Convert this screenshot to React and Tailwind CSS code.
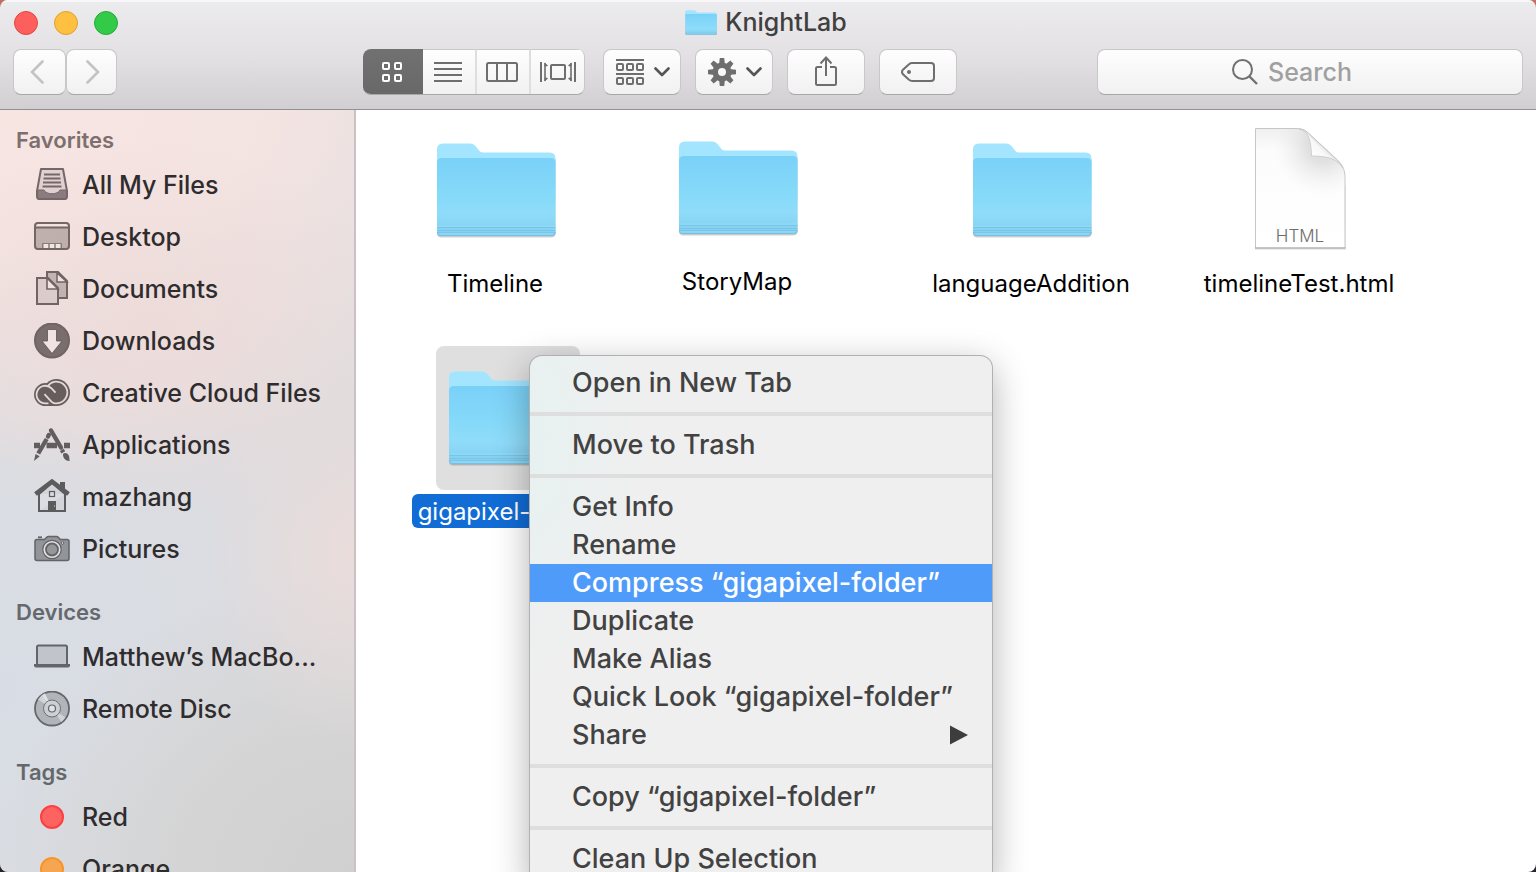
import React, { useId } from "react";

const TOOL_BUTTON =
  "flex h-[46px] items-center justify-center rounded-lg border border-[#c9c7c9] border-b-[#a9a7a9] bg-linear-to-b from-[#fefefe] to-[#f1f1f1] text-[#6e6e6e]";

/* ---------- Folder and document artwork ---------- */

function Folder({ className }) {
  const id = useId();
  return (
    <svg viewBox="0 0 120 98" className={className} aria-hidden="true">
      <defs>
        <linearGradient id={id} x1="0" y1="0" x2="0" y2="1">
          <stop offset="0" stopColor="#7ad1f8" />
          <stop offset="0.45" stopColor="#85d9f9" />
          <stop offset="0.72" stopColor="#8fdcfa" />
          <stop offset="0.86" stopColor="#87d4f4" />
          <stop offset="1" stopColor="#84ceee" />
        </linearGradient>
      </defs>
      <path d="M1 8v82.500q0 4 4 4h110.500q4 0 4-4V16z" fill="#000" opacity="0.18" />
      <path d="M1 6.500q0-6 6-6h27.500q3 0 5 2.500l3.500 4.500q1.500 2 4 2H113.500q6 0 6 6V60H1z" fill="#a3e5ff" />
      <path d="M1 19.500q0-4.500 5-4.500h108.500q5 0 5 4.500v69.500q0 4-4 4H5q-4 0-4-4z" fill={`url(#${id})`} />
      <path d="M1 84.500h118.500M1 87.500h118.500M1 89.500h118.500" stroke="#78c5e7" strokeWidth="1" />
      <path d="M1 83h118.500M1 91h118.500" stroke="#96dcf7" strokeWidth="1" />
      <path d="M1.300 89.500q0.300 3.200 3.700 3.200h110.500q3.400 0 3.700-3.200" fill="none" stroke="#6fb9d9" strokeWidth="0.800" />
    </svg>
  );
}

function HtmlDocument() {
  return (
    <div className="relative h-[126px] w-[94px]">
      <svg viewBox="0 0 94 126" className="size-full" aria-hidden="true">
        <defs>
          <linearGradient id="page-fill" x1="0" y1="0" x2="0" y2="1">
            <stop offset="0" stopColor="#efefef" />
            <stop offset="0.18" stopColor="#fcfcfc" />
            <stop offset="1" stopColor="#ffffff" />
          </linearGradient>
          <radialGradient id="page-shade" gradientUnits="userSpaceOnUse" cx="70" cy="20" r="50">
            <stop offset="0" stopColor="#cccccc" stopOpacity="0.8" />
            <stop offset="0.35" stopColor="#d2d2d2" stopOpacity="0.6" />
            <stop offset="0.7" stopColor="#e2e2e2" stopOpacity="0.3" />
            <stop offset="1" stopColor="#eeeeee" stopOpacity="0" />
          </radialGradient>
          <linearGradient id="page-curl" gradientUnits="userSpaceOnUse" x1="58" y1="31" x2="72" y2="17">
            <stop offset="0" stopColor="#ffffff" />
            <stop offset="0.6" stopColor="#f8f8f8" />
            <stop offset="1" stopColor="#d8d8d8" />
          </linearGradient>
        </defs>
        <path d="M2 60h91v64H2z" fill="#000" opacity="0.08" />
        <path d="M2.500 2.500H43c7 0 10 2 15 7l26 24c5 5 8 10 8 18v70.500H2.500z" fill="url(#page-fill)" />
        <path d="M2.500 2.500H43c7 0 10 2 15 7l26 24c5 5 8 10 8 18v70.500H2.500z" fill="url(#page-shade)" stroke="#c6c6c6" />
        <path d="M46 3c9 2 12 10 12.500 27C75 30 84 33 90 42c-2-4-4-6-7-9L58 10C54 6 51 3.500 46 3z" fill="url(#page-curl)" stroke="#c6c6c6" strokeWidth="0.800" />
        <path d="M2 122h90.500" stroke="#a8a8a8" />
      </svg>
      <span className="absolute inset-x-0 bottom-0 text-center text-[17px] leading-8 font-light text-[#6d6d6d]">HTML</span>
    </div>
  );
}

/* ---------- Sidebar icons (36 x 36 grid) ---------- */

function SideIcon({ children }) {
  return (
    <svg viewBox="0 0 36 36" className="size-9 shrink-0" fill="none" stroke="currentColor" strokeWidth="2" aria-hidden="true">
      {children}
    </svg>
  );
}

const AllFilesIcon = () => (
  <SideIcon>
    <path d="M7 2h22l4 22v5q0 3-2 3H5q-2 0-2-3v-5z" fill="currentColor" fillOpacity="0.15" strokeLinejoin="round" />
    <path d="M3 23h7c2 5 14 5 16 0h7v6q0 3-2 3H5q-2 0-2-3z" fill="currentColor" fillOpacity="0.8" stroke="none" />
    <path d="M10 7.500h16M9.500 11.500h17M9 15.500h18M8.500 19.500h19" strokeWidth="1.800" />
    <path d="M3 23h7c2 5 14 5 16 0h7" strokeWidth="1" />
  </SideIcon>
);

const DesktopIcon = () => (
  <SideIcon>
    <path d="M1 8h34v19q0 3-3 3H4q-3 0-3-3z" fill="currentColor" fillOpacity="0.4" stroke="none" />
    <rect x="1" y="4" width="34" height="26" rx="3" />
    <path d="M1 8.500h34" />
    <path d="M10 25h4v4h-4zM16 25h4v4h-4zM22 25h4v4h-4z" fill="#f2e6e4" stroke="none" />
    <path d="M8.500 29v-4.500h19V29M15 24.500V29M21 24.500V29" strokeWidth="1" opacity="0.7" />
  </SideIcon>
);

const DocumentsIcon = () => (
  <SideIcon>
    <path d="M13 9V1h11l9 9v17H24" fill="currentColor" fillOpacity="0.35" />
    <path d="M23 2v9h10z" fill="#efe2e0" strokeWidth="1.500" />
    <path d="M3 7h11l10 10v16H3z" fill="#d9cccb" />
    <path d="M13 7v11h11z" fill="#efe2e0" strokeWidth="1.600" />
  </SideIcon>
);

const DownloadsIcon = () => (
  <SideIcon>
    <circle cx="18" cy="17.500" r="17" fill="currentColor" fillOpacity="0.92" />
    <path d="M13.500 6.500h9V18H28L18 30.500 8 18h5.500z" fill="#f0e3e1" stroke="#5f5452" strokeWidth="0.800" />
  </SideIcon>
);

const CreativeCloudIcon = () => (
  <SideIcon>
    <circle cx="11.500" cy="19.600" r="11.500" fill="currentColor" stroke="none" />
    <circle cx="22.500" cy="17.500" r="13.500" fill="currentColor" stroke="none" />
    <path d="M11 22h12v9H11z" fill="currentColor" stroke="none" />
    <path d="M14.200 10.600A10.800 10.800 0 1 1 22.500 28.300H21c-1.500 0-2.400-.5-3.600-1.700L10.500 19.200" stroke="#e5d9d8" strokeWidth="1.800" />
    <path d="M14.500 28.400h-3A8.800 8.800 0 1 1 17.800 13.600l3.700 4" stroke="#e5d9d8" strokeWidth="1.800" />
  </SideIcon>
);

const ApplicationsIcon = () => (
  <SideIcon>
    <path d="M0 18.500h6M12.500 18.500h10.500M30 18.500h6" strokeWidth="5.500" />
    <path d="M17 3.500l10 17" strokeWidth="4.400" strokeLinecap="round" />
    <path d="M27.800 22.800l1.500 2.500" strokeWidth="4.400" />
    <path d="M29 27c2-2 5-.5 6 2 .7 1.800 0 3.500.8 5-4 .3-7-3-6.800-7z" fill="currentColor" stroke="none" />
    <path d="M14.800 8l-.8 1.500" strokeWidth="4.400" strokeLinecap="round" />
    <path d="M12.700 12L4.200 26.500" strokeWidth="4.400" />
    <path d="M1.500 27l4.200 2.200L0 34z" fill="currentColor" stroke="none" />
  </SideIcon>
);

const HomeIcon = () => (
  <SideIcon>
    <path d="M5 15v17h26V15M5 32V15L18 4l13 11" fill="currentColor" fillOpacity="0.06" />
    <path d="M1.500 15L18 2.500 34.500 15" strokeWidth="4.400" />
    <path d="M26 3h5v9l-5-4z" fill="currentColor" stroke="none" />
    <rect x="15.500" y="12.500" width="5" height="5" strokeWidth="1.200" />
    <path d="M14 22h8v10h-8z" fill="currentColor" stroke="none" />
    <circle cx="20.500" cy="27" r="0.600" fill="#e5e2e3" stroke="none" />
  </SideIcon>
);

const PicturesIcon = () => (
  <SideIcon>
    <path d="M4 6.300h4" strokeWidth="1.800" />
    <path d="M3 8.500h7.500l2.200-2.200q.6-.8 1.800-.8h8q1.200 0 1.800.8l2 2.200H33q2 0 2 2v17q0 2-2 2H3q-2 0-2-2v-17q0-2 2-2z" fill="currentColor" fillOpacity="0.6" strokeWidth="1.500" />
    <circle cx="18" cy="18.500" r="9.200" fill="#e2e1e3" strokeWidth="1.200" />
    <circle cx="18" cy="18.500" r="6" fill="#97979a" strokeWidth="1.800" />
    <circle cx="28.500" cy="12" r="1.300" fill="#e2e1e3" strokeWidth="1" />
  </SideIcon>
);

const LaptopIcon = () => (
  <SideIcon>
    <path d="M3 25V8q0-1.500 1.500-1.500h27Q33 6.500 33 8v17" fill="currentColor" fillOpacity="0.2" />
    <path d="M0 25h36v1.500q0 2-2 2H2q-2 0-2-2z" fill="currentColor" stroke="none" />
  </SideIcon>
);

const DiscIcon = () => (
  <SideIcon>
    <circle cx="18" cy="17.500" r="17" fill="#b1b4b9" strokeWidth="1.800" />
    <path d="M18 17.500L4 8.500l3.500-4zM18 17.500l13.500 9-4 4.500z" fill="#d0d3d8" stroke="none" />
    <path d="M18 17.500L7.500 4.500 11 2.300z" fill="#dee1e6" stroke="none" />
    <circle cx="18" cy="17.500" r="8.500" fill="#cfd2d7" strokeWidth="1" opacity="0.9" />
    <circle cx="18" cy="17.500" r="3.500" fill="#dfe2e8" strokeWidth="1.200" />
  </SideIcon>
);

const TagDot = ({ className }) => (
  <span className="flex w-9 shrink-0 justify-center">
    <span className={`size-6 rounded-full border-2 ${className}`} />
  </span>
);

const SIDEBAR = [
  {
    title: "Favorites",
    heading: "text-[#7d6f6e]",
    items: [
      { label: "All My Files", icon: <AllFilesIcon />, tone: "text-[#74676a]" },
      { label: "Desktop", icon: <DesktopIcon />, tone: "text-[#736665]" },
      { label: "Documents", icon: <DocumentsIcon />, tone: "text-[#716463]" },
      { label: "Downloads", icon: <DownloadsIcon />, tone: "text-[#6f6463]" },
      { label: "Creative Cloud Files", icon: <CreativeCloudIcon />, tone: "text-[#675d5d]" },
      { label: "Applications", icon: <ApplicationsIcon />, tone: "text-[#625e5f]" },
      { label: "mazhang", icon: <HomeIcon />, tone: "text-[#5c5b5d]" },
      { label: "Pictures", icon: <PicturesIcon />, tone: "text-[#626467]" },
    ],
  },
  {
    title: "Devices",
    heading: "text-[#65686d]",
    items: [
      { label: "Matthew’s MacBo...", icon: <LaptopIcon />, tone: "text-[#62656b]" },
      { label: "Remote Disc", icon: <DiscIcon />, tone: "text-[#64676c]" },
    ],
  },
  {
    title: "Tags",
    heading: "text-[#65686b]",
    items: [
      { label: "Red", icon: <TagDot className="border-[#fc3f40] bg-[#fe6261]" />, tone: "" },
      { label: "Orange", icon: <TagDot className="border-[#f99528] bg-[#f6a550]" />, tone: "" },
    ],
  },
];

function Sidebar() {
  return (
    <nav
      aria-label="Sidebar"
      className="w-[356px] shrink-0 overflow-hidden border-r-2 border-[#c9c1c3] bg-[#dcdcdf] bg-[radial-gradient(ellipse_150px_200px_at_354px_440px,#eadcdb_0%,#eadcdb00_100%),radial-gradient(ellipse_260px_190px_at_150px_220px,#eddbd9_0%,#eddbd900_100%),radial-gradient(ellipse_640px_360px_at_0px_0px,#f7e5e2_0%,#f4e4e2_40%,#f0e2e100_100%),radial-gradient(ellipse_360px_300px_at_100%_100%,#d0d0d0_0%,#d4d4d4_45%,#d7d7d800_100%),radial-gradient(ellipse_400px_420px_at_0px_580px,#d8dde5_0%,#d8dde500_100%)] pt-[11px]"
    >
      {SIDEBAR.map((section) => (
        <section key={section.title} className="mb-[18px]">
          <h2 className={`flex h-[38px] items-center pl-4 text-[22px] font-semibold ${section.heading}`}>{section.title}</h2>
          <ul>
            {section.items.map((item) => (
              <li key={item.label}>
                <a href="#" className="flex h-[52px] items-center gap-3 pl-[34px] whitespace-nowrap">
                  <span className={item.tone}>{item.icon}</span>
                  <span className="pt-px text-[25px] font-medium text-[#2f2c2e]">{item.label}</span>
                </a>
              </li>
            ))}
          </ul>
        </section>
      ))}
    </nav>
  );
}

/* ---------- Toolbar ---------- */

const Chevron = () => (
  <svg viewBox="0 0 16 10" className="h-[10px] w-4" fill="none" stroke="#555" strokeWidth="2.600" strokeLinecap="round" strokeLinejoin="round" aria-hidden="true">
    <path d="M1.500 1.500L8 8l6.500-6.500" />
  </svg>
);

const GridIcon = () => (
  <svg viewBox="0 0 20 20" className="size-5" fill="none" stroke="currentColor" strokeWidth="2" aria-hidden="true">
    <rect x="1" y="1" width="6" height="6" rx="1" />
    <rect x="13" y="1" width="6" height="6" rx="1" />
    <rect x="1" y="13" width="6" height="6" rx="1" />
    <rect x="13" y="13" width="6" height="6" rx="1" />
  </svg>
);

const ListIcon = () => (
  <svg viewBox="0 0 28 20" className="h-5 w-7" stroke="currentColor" strokeWidth="2" aria-hidden="true">
    <path d="M0 1h28M0 7h28M0 13h28M0 19h28" />
  </svg>
);

const ColumnsIcon = () => (
  <svg viewBox="0 0 32 20" className="h-5 w-8" fill="none" stroke="currentColor" strokeWidth="2" aria-hidden="true">
    <rect x="1" y="1" width="30" height="18" rx="1.500" />
    <path d="M11 1v18M21 1v18" />
  </svg>
);

const CoverFlowIcon = () => (
  <svg viewBox="0 0 36 20" className="h-5 w-9" fill="none" stroke="currentColor" strokeWidth="2" aria-hidden="true">
    <rect x="11" y="3" width="14" height="14" rx="1" />
    <path d="M1 0v20M35 0v20" />
    <path d="M5 1v18M31 1v18" strokeWidth="1.600" />
    <path d="M4.500 0.500l3.500 3-1.500 1L4.500 4zM4.500 19.500l3.500-3-1.500-1-2 .5zM31.500.500l-3.500 3 1.500 1 2-.5zM31.500 19.500l-3.500-3 1.500-1 2 .5z" fill="currentColor" stroke="none" />
  </svg>
);

const ArrangeIcon = () => (
  <svg viewBox="0 0 28 26" className="h-[26px] w-7" fill="none" stroke="currentColor" strokeWidth="2" aria-hidden="true">
    <path d="M0 1h28M0 15h28" />
    <rect x="1" y="5" width="6" height="6" rx="1" />
    <rect x="11" y="5" width="6" height="6" rx="1" />
    <rect x="21" y="5" width="6" height="6" rx="1" />
    <rect x="1" y="19" width="6" height="6" rx="1" />
    <rect x="11" y="19" width="6" height="6" rx="1" />
    <rect x="21" y="19" width="6" height="6" rx="1" />
  </svg>
);

const GearIcon = () => (
  <svg viewBox="0 0 28 28" className="size-7" aria-hidden="true">
    <g fill="currentColor">
      <path d="M14 4.500a9.500 9.500 0 1 0 0 19 9.500 9.500 0 0 0 0-19zm0 5.500a4 4 0 1 1 0 8 4 4 0 0 1 0-8z" fillRule="evenodd" />
      {[0, 45, 90, 135, 180, 225, 270, 315].map((angle) => (
        <path key={angle} d="M11 7l.8-7h4.400l.8 7z" transform={`rotate(${angle} 14 14)`} />
      ))}
    </g>
  </svg>
);

const ShareIcon = () => (
  <svg viewBox="0 0 24 32" className="h-8 w-6" fill="none" stroke="currentColor" strokeWidth="2" aria-hidden="true">
    <path d="M8 11H3.500Q2 11 2 12.500v15Q2 29 3.500 29h17q1.500 0 1.500-1.500v-15Q22 11 20.500 11H16M12 20V2M6.500 7.500L12 1.500l5.500 6" />
  </svg>
);

const TagIcon = () => (
  <svg viewBox="0 0 34 20" className="h-5 w-[34px]" fill="none" stroke="currentColor" strokeWidth="2" aria-hidden="true">
    <path d="M11 1h19q3 0 3 3v12q0 3-3 3H11q-1.500 0-3-1.200l-6-5.500q-2-2.300 0-4.600l6-5.500Q9.500 1 11 1z" />
    <circle cx="8" cy="10" r="2" fill="currentColor" stroke="none" />
  </svg>
);

function Toolbar() {
  const segment = "flex items-center justify-center border-l-2 border-[#dedede]";
  return (
    <div className="mt-1 flex px-[13px]">
      <div className="flex shrink-0">
        <button aria-label="Back" className={`${TOOL_BUTTON} w-[53px]`}>
          <svg viewBox="0 0 14 24" className="mr-[6px] h-6 w-[14px]" fill="none" stroke="#c3c3c3" strokeWidth="2.600" strokeLinecap="round" aria-hidden="true">
            <path d="M12.500 1.500L2 12l10.500 10.500" />
          </svg>
        </button>
        <button aria-label="Forward" className={`${TOOL_BUTTON} w-[51px]`}>
          <svg viewBox="0 0 14 24" className="ml-[2px] h-6 w-[14px]" fill="none" stroke="#c3c3c3" strokeWidth="2.600" strokeLinecap="round" aria-hidden="true">
            <path d="M1.500 1.500L12 12 1.500 22.500" />
          </svg>
        </button>
      </div>

      <div className="ml-[246px] flex shrink-0 gap-[14px]">
        <div className={`${TOOL_BUTTON} mr-1 items-stretch! overflow-hidden border-t-0! border-l-0!`}>
          <button aria-label="Icon view" aria-pressed="true" className="-mb-px flex w-[60px] items-center justify-center bg-linear-to-b from-[#717171] to-[#686868] pr-[2px] text-white">
            <GridIcon />
          </button>
          <button aria-label="List view" className="flex w-[52px] items-center justify-center border-t border-[#c9c7c9] pr-[2px]">
            <ListIcon />
          </button>
          <button aria-label="Column view" className={`${segment} w-[54px] border-t border-t-[#c9c7c9] pr-[2px]`}>
            <ColumnsIcon />
          </button>
          <button aria-label="Cover Flow view" className={`${segment} w-[55px] border-t border-t-[#c9c7c9]`}>
            <CoverFlowIcon />
          </button>
        </div>
        <button aria-label="Arrange" className={`${TOOL_BUTTON} w-[78px] gap-[10px] pl-[2px]`}>
          <ArrangeIcon />
          <Chevron />
        </button>
        <button aria-label="Action" className={`${TOOL_BUTTON} w-[78px] gap-[10px] pl-[2px]`}>
          <GearIcon />
          <Chevron />
        </button>
        <button aria-label="Share" className={`${TOOL_BUTTON} w-[78px]`}>
          <ShareIcon />
        </button>
        <button aria-label="Tags" className={`${TOOL_BUTTON} w-[78px]`}>
          <TagIcon />
        </button>
      </div>

      <label className={`${TOOL_BUTTON} relative ml-[140px] min-w-0 flex-1`}>
        <svg viewBox="0 0 26 26" className="absolute left-1/2 -ml-[78px] size-[26px]" fill="none" stroke="#707070" strokeWidth="2" aria-hidden="true">
          <circle cx="10.500" cy="10.500" r="9.500" />
          <path d="M17.500 17.500l7.500 7.500" strokeWidth="2.400" />
        </svg>
        <input
          type="text"
          role="searchbox"
          aria-label="Search"
          placeholder="Search"
          className="w-full bg-transparent pt-[2px] text-center text-[25px] font-medium text-[#333] outline-none placeholder:text-[#a0a0a0]"
        />
      </label>
    </div>
  );
}

function TitleBar() {
  return (
    <header className="shrink-0 border-b border-[#919092] bg-linear-to-b from-[#ecebed] via-[#e3e1e4] to-[#d1cfd2] pb-[14px] shadow-[inset_0_2px_0_#f7f6f8]">
      <div className="flex h-[45px] items-center px-[14px]">
        <div className="flex flex-1 gap-4">
          <button aria-label="Close" className="size-6 rounded-full border border-[#e2463f] bg-[#fd605c]" />
          <button aria-label="Minimize" className="size-6 rounded-full border border-[#e0a02f] bg-[#fec041]" />
          <button aria-label="Zoom" className="size-6 rounded-full border border-[#22ab35] bg-[#33ca4a]" />
        </div>
        <h1 className="flex items-center gap-2 pr-1 text-[25px] font-medium text-[#404040]">
          <Folder className="h-[26px] w-8" />
          KnightLab
        </h1>
        <div className="flex-1" />
      </div>
      <Toolbar />
    </header>
  );
}

/* ---------- Icon view ---------- */

const FILES = [
  { name: "Timeline", place: "left-[39px] top-2" },
  { name: "StoryMap", place: "left-[281px] top-[6px]" },
  { name: "languageAddition", place: "left-[575px] top-2" },
  { name: "timelineTest.html", place: "left-[843px] top-2", html: true },
  { name: "gigapixel-folder", place: "left-[51px] top-[236px]", selected: true },
];

function FileItem({ file }) {
  return (
    <li className={`absolute flex w-[200px] flex-col items-center gap-1 ${file.place}`}>
      <div className={`ml-[2px] flex size-36 justify-center rounded-lg ${file.html ? "pt-2" : "pt-[25px]"} ${file.selected ? "bg-[#dfdfdf]" : ""}`}>
        {file.html ? <HtmlDocument /> : <Folder className="h-[98px] w-[120px]" />}
      </div>
      <span className={`flex h-[34px] items-center rounded-md px-[6px] pt-px text-[24px] whitespace-nowrap ${file.selected ? "bg-[#116cd6] text-white" : "text-black"}`}>
        {file.name}
      </span>
    </li>
  );
}

/* ---------- Context menu ---------- */

const MENU = [
  ["Open in New Tab"],
  ["Move to Trash"],
  ["Get Info", "Rename", "Compress “gigapixel-folder”", "Duplicate", "Make Alias", "Quick Look “gigapixel-folder”", "Share"],
  ["Copy “gigapixel-folder”"],
  ["Clean Up Selection"],
];

function ContextMenu() {
  return (
    <div
      role="menu"
      className="absolute top-[246px] left-[174px] w-[462px] rounded-xl bg-[#efefef] bg-[radial-gradient(ellipse_110px_240px_at_0px_80px,#e7f1f1_0%,#efefef_100%)] py-2 shadow-[0_0_0_1px_#b0b0b0,0_10px_36px_rgba(0,0,0,0.32)]"
    >
      {MENU.map((group, index) => (
        <div key={group[0]} role="group">
          {index > 0 && <div role="separator" className="my-[10px] h-1 bg-[#dedede]" />}
          {group.map((label) => (
            <button
              key={label}
              role="menuitem"
              className={`flex h-[38px] w-full items-center justify-between pr-6 pl-[42px] text-[27px] font-medium whitespace-nowrap ${
                label.startsWith("Compress") ? "bg-[#4f9bfa] text-white" : "text-[#424242]"
              }`}
            >
              {label}
              {label === "Share" && (
                <svg viewBox="0 0 18 20" className="h-5 w-[18px]" aria-hidden="true">
                  <path d="M0 0.500L18 10 0 19.500z" fill="#3d3d3d" />
                </svg>
              )}
            </button>
          ))}
        </div>
      ))}
    </div>
  );
}

export default function App() {
  return (
    <div className="h-screen bg-linear-to-b from-[#c0705f] to-[#25252b] font-['Inter','Liberation_Sans',sans-serif]">
      <div className="flex h-full flex-col overflow-hidden rounded-lg">
        <TitleBar />
        <div className="flex min-h-0 flex-1">
          <Sidebar />
          <main className="relative min-w-0 flex-1 overflow-hidden bg-white">
            <ul>
              {FILES.map((file) => (
                <FileItem key={file.name} file={file} />
              ))}
            </ul>
            <ContextMenu />
          </main>
        </div>
      </div>
    </div>
  );
}
